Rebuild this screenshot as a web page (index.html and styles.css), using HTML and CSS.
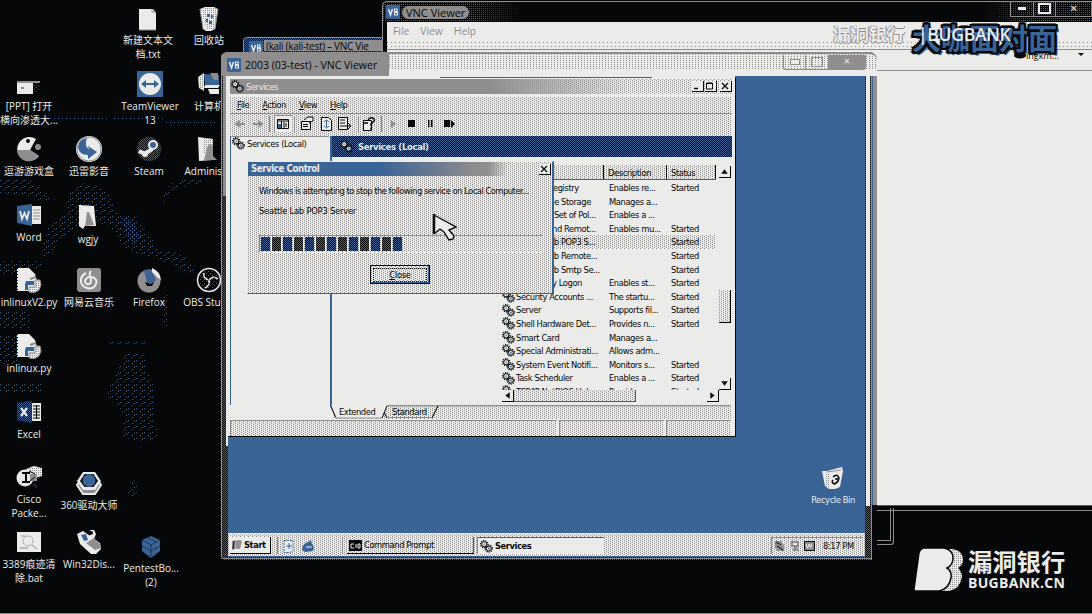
FILE: index.html
```html
<!DOCTYPE html>
<html lang="zh">
<head>
<meta charset="utf-8">
<title>Desktop</title>
<link rel="stylesheet" href="styles.css">
</head>
<body>
<svg class="defs" width="0" height="0">
  <defs>
    <pattern id="chk" width="2" height="2" patternUnits="userSpaceOnUse"><rect width="1" height="1" fill="#060709"/><rect x="1" y="1" width="1" height="1" fill="#060709"/></pattern>
    <pattern id="gdot" width="2" height="2" patternUnits="userSpaceOnUse"><rect width="1" height="1" fill="#908d8e"/></pattern>
    <pattern id="bdot" width="4" height="4" patternUnits="userSpaceOnUse"><rect width="1" height="1" fill="#3a6396"/><rect x="2" y="2" width="1" height="1" fill="#3a6396"/></pattern>
    <pattern id="bthin" width="8" height="6" patternUnits="userSpaceOnUse"><rect width="1" height="1" fill="#3a6396"/><rect x="4" y="3" width="1" height="1" fill="#3a6396"/><rect x="6" y="1" width="1" height="1" fill="#3a6396"/></pattern>
    <symbol id="gears" viewBox="0 0 13 13">
      <circle cx="4.2" cy="4.2" r="2.6" fill="#ebecea" stroke="#060709" stroke-width="1"/>
      <circle cx="4.2" cy="4.2" r="3.6" fill="none" stroke="#060709" stroke-width="1.3" stroke-dasharray="1.1 1.1"/>
      <circle cx="4.2" cy="4.2" r="1" fill="#908d8e"/>
      <circle cx="8.8" cy="8.6" r="2.5" fill="#ebecea" stroke="#060709" stroke-width="1"/>
      <circle cx="8.8" cy="8.6" r="3.5" fill="none" stroke="#060709" stroke-width="1.3" stroke-dasharray="1.1 1.1"/>
      <circle cx="8.8" cy="8.6" r="1" fill="#3a6396"/>
    </symbol>
    <symbol id="vnc" viewBox="0 0 14 14">
      <rect width="14" height="14" rx="1" fill="#3a6396"/>
      <path d="M2.5 4l2 6L6.5 4" fill="none" stroke="#ebecea" stroke-width="1.5"/>
      <path d="M8.5 4h2.6v2.6H8.5zM8.5 7.4h3V10h-3z" fill="none" stroke="#ebecea" stroke-width="1.1"/>
    </symbol>
    <symbol id="py" viewBox="0 0 26 26">
      <path d="M1 1h12l6 6 3 10v7H1z" fill="#ebecea"/><path d="M1.5 1v24" stroke="#060709" stroke-dasharray="1 2"/>
      <path d="M10 14h8v4h-6v5h-3v-6z" fill="#3a6396"/><path d="M19 13h5l1 5-2 5-5 3-5-1v-5h6z" fill="#ebecea" stroke="#908d8e"/><path d="M14 12l6-2" stroke="#908d8e" stroke-width="2"/>
      <path d="M19 13h5l1 5-2 5-5 3-5-1v-5h6z" fill="url(#gdot)"/>
    </symbol>
    <symbol id="bin" viewBox="0 0 20 25">
      <path d="M1 3l5-2h9l4 2-3 20-4 2H7l-3-2z" fill="#ebecea"/><path d="M1 3l3 20M19 3l-3 20" stroke="#908d8e"/>
      <path d="M2 3l5-1h10l2 2-3 18-5 2H8z" fill="url(#gdot)"/>
      <path d="M8 8h3v3H8zM12 9h2v3h-2zM7 13h2v3H7zM10 15h3v3h-3z" fill="#3a6396"/>
    </symbol>
  </defs>
</svg>

<main class="desktop">
  <svg class="wallpaper" width="230" height="614" viewBox="0 0 230 614" fill="url(#bthin)">
    <path d="M48 117h62v2H48zM113 117h50v2h-50zM165 121h50v2h-50z" fill="url(#bdot)"/>
    <path d="M0 180h30l10 8 15 12h-15l-20-5-20-2zM70 190l18-8 20 10 10 22 18 2 12 18 10 14 25 8 15 16-8 2-30-14-34-10-16-24-20-6-14 8-20 18-10 14-6-2 8-30 18-18z"/>
    <path d="M120 216l12 4 10 16-6 8-8-6z" fill="url(#bdot)"/>
    <path d="M0 260h42v10H20l-8 6H0zM0 312h30v16H0zM0 335h18v30H0zM160 200l10-16 20-6 16 2-4 5-20 2-14 8-6 12zM106 340l40 1v4h-38zM126 352l20 3v14l8 18v30l4 18-12 8-24-6 4-24-20-16 6-16zM160 295h8v32h-5zM130 478l8 6-2 12h-8zM0 384h42v8H0z"/>
  </svg>

  <div class="icon i-txt"><svg viewBox="0 0 26 26"><path d="M4 4h14l3 4v17H4z" fill="#ebecea"/><path d="M17 4v3h4M4 25h17" fill="none" stroke="#908d8e"/></svg><span>新建文本文<br>档.txt</span></div>
  <div class="icon i-bin"><svg viewBox="0 0 26 26"><use href="#bin" x="3" y="1" width="20" height="25"/></svg><span>回收站</span></div>
  <div class="icon i-ppt"><svg viewBox="0 0 26 26"><path d="M1 11h16v12H1z" fill="#ebecea"/><path d="M1 10h23v2H1z" fill="#908d8e"/><path d="M18 12h5v9h-5z" fill="url(#bdot)"/><path d="M5 16h3v2H5z" fill="#908d8e"/></svg><span>[PPT] 打开<br>横向渗透大...</span></div>
  <div class="icon i-tv"><svg viewBox="0 0 26 26"><path d="M0 0h26v26H0z" fill="#3a6396"/><circle cx="13" cy="13" r="11" fill="#ebecea"/><path d="M4 13l5-4v3h8V9l5 4-5 4v-3H9v3z" fill="#3a6396"/></svg><span>TeamViewer<br>13</span></div>
  <div class="icon i-pc"><svg viewBox="0 0 26 26"><path d="M2 6l6-4v18l-5-3z" fill="#ebecea"/><path d="M2 6l6-4v18l-5-3z" fill="url(#gdot)"/><path d="M8 3l15 1v11l-14-1z" fill="#3a6396"/><path d="M9 14h15l-2 3H8zM12 18h11v5H14z" fill="#ebecea"/><path d="M14 2h8v7h-4z" fill="#908d8e"/></svg><span>计算机</span></div>

  <div class="icon i-game"><svg viewBox="0 0 26 26"><path d="M13 1a12 12 0 1 0 10 19l-9-6 6-11a12 12 0 0 0-7-2z" fill="#ebecea"/><path d="M1 14h13l9 6A12 12 0 0 1 1 14z" fill="#908d8e"/><circle cx="12" cy="5" r="2" fill="#060709"/><circle cx="22" cy="11" r="3" fill="#908d8e"/></svg><span>逗游游戏盒</span></div>
  <div class="icon i-xl"><svg viewBox="0 0 26 26"><circle cx="13" cy="13" r="13" fill="#ebecea"/><circle cx="13" cy="13" r="12" fill="none" stroke="#908d8e"/><path d="M2 11q1-8 9-9-3 7 2 12l-1-4 9 6-9 7v-4Q3 19 2 11z" fill="#3a6396"/></svg><span>迅雷影音</span></div>
  <div class="icon i-steam"><svg viewBox="0 0 26 26"><circle cx="13" cy="13" r="12" fill="#3a6396"/><circle cx="13" cy="13" r="12" fill="url(#chk)"/><path d="M3 15l6 3 7-5" fill="none" stroke="#ebecea" stroke-width="4"/><circle cx="17" cy="9" r="4" fill="#3a6396" stroke="#ebecea" stroke-width="2"/><circle cx="9" cy="18" r="3" fill="#ebecea"/></svg><span>Steam</span></div>
  <div class="icon i-adm"><svg viewBox="0 0 26 26"><path d="M2 1l15 2v21L3 25z" fill="#ebecea"/><path d="M8 2l9 1v14H8z" fill="url(#gdot)"/><path d="M11 12q4-8 6 0v8l4 4H8z" fill="#908d8e"/></svg><span>Administ...</span></div>

  <div class="icon i-word"><svg viewBox="0 0 26 26"><path d="M15 4h10v18H15z" fill="#ebecea"/><path d="M17 8h7M17 11h7M17 14h7M17 17h7" stroke="#908d8e"/><path d="M1 4l15-2v22L1 21z" fill="#3a6396"/><path d="M4 9l2 8 2.500-6 2.500 6 2-8" fill="none" stroke="#ebecea" stroke-width="1.8"/></svg><span>Word</span></div>
  <div class="icon i-wg"><svg viewBox="0 0 26 26"><path d="M4 1l15 1 2 20-11 0-2 3-4-3z" fill="#ebecea"/><path d="M12 8l2 0 5 13-9 1z" fill="#908d8e"/></svg><span>wgjy</span></div>

  <div class="icon i-py2"><svg viewBox="0 0 26 26"><use href="#py" width="26" height="26"/></svg><span>inlinuxV2.py</span></div>
  <div class="icon i-net"><svg viewBox="0 0 26 26"><rect x="1" y="1" width="24" height="24" rx="3" fill="#908d8e"/><path d="M15 4q-2 2-1 5t1 5a3 3 0 1 1-5-2q2-3 6-2 6 2 4 7-3 6-9 4-7-2-6-9 1-4 5-6" fill="none" stroke="#ebecea" stroke-width="2"/></svg><span>网易云音乐</span></div>
  <div class="icon i-ff"><svg viewBox="0 0 26 26"><circle cx="13" cy="14" r="11.500" fill="#908d8e"/><path d="M8 4l6-2 4 6 2 5-4 4-5-1-1-5z" fill="#3a6396"/><path d="M16 1q8 3 9 12l-4-3-5-5z" fill="#ebecea"/><path d="M9 15l6 2 3-2-2 4h-5z" fill="#060709"/></svg><span>Firefox</span></div>
  <div class="icon i-obs"><svg viewBox="0 0 26 26"><circle cx="13" cy="13" r="11.500" fill="#060709" stroke="#ebecea" stroke-width="1.5"/><path d="M13 13q-6-1-5-7M13 13q4-5 9-1M13 13q1 6-4 8" fill="none" stroke="#ebecea" stroke-width="1.6"/><circle cx="13" cy="13" r="10" fill="url(#bdot)"/></svg><span>OBS Stud...</span></div>

  <div class="icon i-py"><svg viewBox="0 0 26 26"><use href="#py" width="26" height="26"/></svg><span>inlinux.py</span></div>
  <div class="icon i-xls"><svg viewBox="0 0 26 26"><path d="M15 4h10v18H15z" fill="#ebecea"/><path d="M17 7h7M17 10h7M17 13h7M17 16h7M17 19h7M20.500 6v14" stroke="#060709"/><path d="M1 4l15-2v22L1 21z" fill="#3a6396"/><path d="M1 4l15-2v22L1 21z" fill="url(#chk)"/><path d="M5 9l6 8M11 9l-6 8" stroke="#ebecea" stroke-width="2.200"/></svg><span>Excel</span></div>
  <div class="icon i-cisco"><svg viewBox="0 0 26 26"><circle cx="9" cy="14" r="8.500" fill="#ebecea"/><path d="M10 5l8-3 8 2v8l-7 2z" fill="#ebecea"/><path d="M12 4h13v7l-10 3z" fill="url(#gdot)"/><path d="M6 9h8M10 9v9M6 18h8" stroke="#060709" stroke-width="2"/><path d="M14 10h7v7h-7z" fill="#908d8e"/><path d="M13 7l6 3M14 17l5-4" stroke="#060709"/><path d="M17 20l4 3" stroke="#3a6396"/></svg><span>Cisco<br>Packe...</span></div>
  <div class="icon i-360"><svg viewBox="0 0 26 26"><path d="M7 6h12l6 9-6 9H7l-6-9z" fill="#908d8e" stroke="#ebecea" stroke-width="2"/><path d="M7 2h12l6 9-6 9H7L1 11z" fill="#ebecea"/><path d="M8.500 4h9l4.500 7-4.500 6h-9L4 11z" fill="#060709"/><circle cx="13" cy="10.500" r="6.500" fill="#3a6396"/><circle cx="13" cy="10.500" r="4" fill="url(#bdot)"/></svg><span>360驱动大师</span></div>
  <div class="icon i-bat"><svg viewBox="0 0 26 26"><path d="M1 3h24v20H1z" fill="#ebecea"/><circle cx="12" cy="12" r="5" fill="none" stroke="#908d8e" stroke-dasharray="2 1"/><path d="M16 16l5 4M4 19h8M5 7h4" stroke="#908d8e"/></svg><span>3389痕迹清<br>除.bat</span></div>
  <div class="icon i-w32"><svg viewBox="0 0 26 26"><path d="M1 5l6-3 17 12 1 6-5 5h-5L4 15z" fill="#ebecea"/><path d="M12 7l5-2V3l-4-2h5l2 4-2 5z" fill="#ebecea"/><path d="M5 6l5-1 2 6-4 1z" fill="#3a6396"/><path d="M10 14l8-5 6 6 1 4-6 2z" fill="#908d8e"/></svg><span>Win32Dis...</span></div>
  <div class="icon i-pen"><svg viewBox="0 0 26 26"><path d="M13 3l9 4v11l-9 7-9-7V7z" fill="#3a6396"/><path d="M4 7l9 5 9-5M13 12v13M8 4l10 5M4 13l9 5 9-5" fill="none" stroke="#060709" stroke-width=".7" stroke-dasharray="2 1"/></svg><span>PentestBo...<br>(2)</span></div>

  <section class="win-back">
    <header class="back-title"><svg width="14" height="14"><use href="#vnc"/></svg><span class="glow">VNC Viewer</span>
      <div class="back-ctl"><i class="min"></i><i class="max"></i><i class="x">✕</i></div>
    </header>
    <nav class="back-menu"><span>File</span><span>View</span><span>Help</span></nav>
    <div class="back-line"></div>
  </section>

  <div class="kali-edge"></div>
  <section class="win-kali"><svg width="14" height="14"><use href="#vnc"/></svg><span>(kali (kali-test) – VNC Vie</span></section>

  <section class="win-vnc">
    <header class="vnc-title"><svg width="14" height="14"><use href="#vnc"/></svg><span>2003 (03-test) - VNC Viewer</span>
      <div class="vnc-ctl"><i class="min"></i><i class="max"></i><i class="x">✕</i></div>
    </header>
    <div class="guest">
      <div class="strip"></div>
      <section class="services">
        <header class="sv-title"><svg width="13" height="13"><use href="#gears"/></svg><span>Services</span>
          <b class="wb"><svg viewBox="0 0 10 10"><path d="M2 7.500h4" stroke="#060709" stroke-width="1.500"/></svg></b><b class="wb"><svg viewBox="0 0 10 10"><path d="M1.500 2h6v6h-6zM1.500 2.500h6" fill="none" stroke="#060709"/></svg></b><b class="wb gap"><svg viewBox="0 0 10 10"><path d="M2 2l6 6M8 2L2 8" stroke="#060709" stroke-width="1.300"/></svg></b>
        </header>
        <nav class="sv-menu"><span><u>F</u>ile</span><span><u>A</u>ction</span><span><u>V</u>iew</span><span><u>H</u>elp</span></nav>
        <svg class="sv-tools" width="501" height="22" viewBox="231 114 501 22" fill="none" stroke="#060709">
          <path d="M246 124h-8m3-3l-4 3 4 3M254 124h8m-3-3l4 3-4 3" stroke="#908d8e" stroke-width="2"/>
          <path d="M270.500 116v16M295.500 116v16M359.500 116v16M382.500 116v16" stroke="#908d8e"/>
          <path d="M275.500 132.500v-17h18" stroke="#908d8e"/><path d="M276 116h17v16h-17z" fill="#ebecea" stroke="none"/>
          <path d="M278.500 119.500h11v9h-11zM278 121h11M282.500 121v8" /><path d="M279 124h3v4h-3z" fill="#3a6396" stroke="none"/><path d="M285 122v6M287 123v4" />
          <path d="M302.500 121.500h9v8h-9zM305 120l4-3h5v4l-4 2M304 124.500h5M304 126.500h5" fill="#ebecea"/>
          <path d="M322.500 117.500h7l3 3v10h-10z" fill="#ebecea"/><path d="M327.500 120v7M325 122l2.500-2 2.500 2M325 126l2.500 2 2.500-2" stroke="#3a6396"/>
          <path d="M339.500 117.500h9v12h-9zM341 120h5M341 123h5M341 126h4M345 126h6m-2-3l3 3-3 3" fill="#ebecea"/>
          <path d="M364.500 120.500h8v10h-8z" fill="#ebecea"/><path d="M369 120q2-3 5-2 3 2 0 4l-2 2v2M372 127.500v2M365 123h4" stroke-width="1.500"/>
          <path d="M392 120l5 4-5 4z" fill="#908d8e" stroke="none"/><path d="M409 120h7v7h-7zM429 120h1.500v7H429zM432 120h1.500v7H432zM445 120h6v7h-6zM452 120l4 4-4 4z" fill="#060709" stroke="none"/>
        </svg>
        <div class="sv-body">
          <aside class="tree"><svg width="13" height="13"><use href="#gears"/></svg><span>Services (Local)</span></aside>
          <div class="pane">
            <div class="banner"><svg width="13" height="13"><use href="#gears"/></svg><span>Services (Local)</span></div>
            <div class="list">
              <div class="cols"><span class="c1"></span><span class="c2">Description</span><span class="c3">Status</span></div>
              <div class="rows">
                <div class="row"><svg><use href="#gears"/></svg><span class="n">Remote Registry</span><span class="d">Enables re...</span><span>Started</span></div>
                <div class="row"><svg><use href="#gears"/></svg><span class="n">Removable Storage</span><span class="d">Manages a...</span><span></span></div>
                <div class="row"><svg><use href="#gears"/></svg><span class="n">Resultant Set of Pol...</span><span class="d">Enables a ...</span><span></span></div>
                <div class="row"><svg><use href="#gears"/></svg><span class="n">Routing and Remot...</span><span class="d">Enables mu...</span><span>Started</span></div>
                <div class="row sel"><svg><use href="#gears"/></svg><span class="n">Seattle Lab POP3 S...</span><span class="d"></span><span>Started</span></div>
                <div class="row"><svg><use href="#gears"/></svg><span class="n">Seattle Lab Remote...</span><span class="d"></span><span>Started</span></div>
                <div class="row"><svg><use href="#gears"/></svg><span class="n">Seattle Lab Smtp Se...</span><span class="d"></span><span>Started</span></div>
                <div class="row"><svg><use href="#gears"/></svg><span class="n">Secondary Logon</span><span class="d">Enables st...</span><span>Started</span></div>
                <div class="row"><svg><use href="#gears"/></svg><span class="n">Security Accounts ...</span><span class="d">The startu...</span><span>Started</span></div>
                <div class="row"><svg><use href="#gears"/></svg><span class="n">Server</span><span class="d">Supports fil...</span><span>Started</span></div>
                <div class="row"><svg><use href="#gears"/></svg><span class="n">Shell Hardware Det...</span><span class="d">Provides n...</span><span>Started</span></div>
                <div class="row"><svg><use href="#gears"/></svg><span class="n">Smart Card</span><span class="d">Manages a...</span><span></span></div>
                <div class="row"><svg><use href="#gears"/></svg><span class="n">Special Administrati...</span><span class="d">Allows adm...</span><span></span></div>
                <div class="row"><svg><use href="#gears"/></svg><span class="n">System Event Notifi...</span><span class="d">Monitors s...</span><span>Started</span></div>
                <div class="row"><svg><use href="#gears"/></svg><span class="n">Task Scheduler</span><span class="d">Enables a ...</span><span>Started</span></div>
                <div class="row"><svg><use href="#gears"/></svg><span class="n">TCP/IP NetBIOS Hel...</span><span class="d">Provides s...</span><span>Started</span></div>
              </div>
              <div class="vbar"><b class="sb"><svg viewBox="0 0 10 10"><path d="M2 7l3-4 3 4z"/></svg></b><b class="thumb"></b><b class="sb"><svg viewBox="0 0 10 10"><path d="M2 3l3 4 3-4z"/></svg></b></div>
              <div class="hbar"><b class="sb"><svg viewBox="0 0 10 10"><path d="M7 2L3 5l4 3z"/></svg></b><b class="hthumb"></b><b class="sb"><svg viewBox="0 0 10 10"><path d="M3 2l4 3-4 3z"/></svg></b></div>
            </div>
          </div>
        </div>
        <div class="tabs">
          <svg width="400" height="15" viewBox="330 404 400 15"><path d="M386 404.500h346" stroke="#908d8e" stroke-width="1.500"/><path d="M330 404l6 13h46l5-13z" fill="#ebecea"/><path d="M330 404l6 13h46M388 416.500h44l6-12" fill="none" stroke="#908d8e"/><path d="M330.500 404l5 12M382 417l5-12M384 411l3 6M432 417l6-12" fill="none" stroke="#060709"/></svg>
          <span class="t1">Extended</span><span class="t2">Standard</span>
        </div>
        <div class="status"><i></i><i></i><i></i></div>
      </section>

      <section class="dialog">
        <header><span>Service Control</span><b class="wb"><svg viewBox="0 0 10 10"><path d="M2 2l6 6M8 2L2 8" stroke="#060709" stroke-width="1.300"/></svg></b></header>
        <p class="msg">Windows is attempting to stop the following service on Local Computer...</p>
        <p class="svc">Seattle Lab POP3 Server</p>
        <div class="progress"><i></i><i></i><i></i><i></i><i></i><i></i><i></i><i></i><i></i><i></i><i></i><i></i><i></i></div>
        <button class="close"><span><u>C</u>lose</span></button>
      </section>

      <svg class="cursor" width="26" height="28" viewBox="0 0 26 28"><path d="M2 1l22 12-7 3 5 6-1 3-4 1-5-8-4-2-6 4z" fill="#ebecea"/><path d="M2 1l22 12-7 3 5 6-1 3-4 1-5-8" fill="none" stroke="#060709" stroke-width="1.400"/><path d="M2 0v20" stroke="#060709" stroke-width="2.500"/><path d="M2 20l6-5 4 3" fill="none" stroke="#060709" stroke-width="1.200"/></svg>

      <div class="recycle"><svg width="22" height="25" viewBox="0 0 22 25"><path d="M0 5h5l15-4 1 4-3 16-5 2H7l-4-3z" fill="#ebecea"/><path d="M3 8l4 0 0 14-3-2z" fill="url(#gdot)"/><path d="M11 11q4-4 6 1-1 5-5 6-3-2-1-4M13 13h3" fill="none" stroke="#060709" stroke-width="1.500"/><path d="M5 6l14-2" stroke="#908d8e"/></svg><span>Recycle Bin</span></div>

      <footer class="taskbar">
        <div class="start"><svg width="12" height="12" viewBox="0 0 12 12"><path d="M1 2l4-1-1 9-3 1z" fill="#908d8e"/><path d="M3 2L2 10" stroke="#060709"/><path d="M5 2q3-2 6 0l-2 8q-3-1-5 0z" fill="#908d8e"/></svg><span>Start</span></div>
        <div class="ql"><svg width="34" height="14" viewBox="0 0 34 14"><path d="M2 1.500h9v10l-3 2H2z" fill="#ebecea" stroke="#3a6396" stroke-dasharray="2 1"/><path d="M7 4v6M4 7h6" stroke="#3a6396"/><path d="M20 11q0-6 6-8l3-2 1 4q3 3 1 7l-8 1z" fill="#3a6396"/><path d="M24 8h6" stroke="#ebecea"/></svg></div>
        <div class="task"><svg width="13" height="11" viewBox="0 0 13 11"><path d="M0 0h13v11H0z" fill="#060709"/><path d="M2 4h3M2 4v4h3M7 4v4M9 4v4h2V4z" stroke="#ebecea" fill="none"/></svg><span>Command Prompt</span></div>
        <div class="task active"><svg width="13" height="13"><use href="#gears"/></svg><span>Services</span></div>
        <div class="tray"><svg width="42" height="14" viewBox="0 0 42 14"><path d="M2 2h6l3 4v6H5L2 9z" fill="#908d8e"/><path d="M3 3l5 3M4 7l6 4" stroke="#060709"/><path d="M18 2h8v6h-2l2 4h-7l2-4h-3z" fill="#908d8e"/><path d="M20 4h4v2h-4z" fill="#ebecea"/><path d="M31.500 2.500h10v9h-10z" fill="#908d8e" stroke="#060709"/><path d="M33 5l1.500 4L36 5l1.500 4 1-4" stroke="#ebecea" fill="none"/></svg><span>8:17 PM</span></div>
      </footer>
    </div>
  </section>

  <div class="mark">
    <span class="mark-a">漏洞银行</span>
    <span class="mark-b">大咖面对面</span>
    <span class="mark-d">|BUGBANK</span>
    <span class="mark-e"><svg width="12" height="7"><ellipse cx="6" cy="3.500" rx="6" ry="3" fill="#060709"/></svg>ingkm...</span>
    <svg class="mark-v" width="6" height="4"><path d="M0 0h6L3 3z" fill="#060709"/></svg>
  </div>

  <div class="brand">
    <svg width="50" height="44" viewBox="0 0 50 44"><path d="M30 1h8q10 1 11 10 0 6-5 9 4 4 4 9-2 12-13 14h-8z" fill="#ebecea"/><path d="M30 1h8q10 1 11 10 0 6-5 9 4 4 4 9-2 12-13 14h-8z" fill="url(#gdot)"/><path d="M10 0h20q9 2 9 10 0 7-6 10 5 3 4 10-2 11-12 13H1q-1 0-1-2L5 5q1-4 5-5z" fill="#ebecea" stroke="#060709" stroke-width="1.500"/></svg>
    <div><strong>漏洞银行</strong><em>BUGBANK.CN</em></div>
  </div>
</main>
</body>
</html>
```

FILE: styles.css
```css
:root {
  --k: #060709;
  --w: #ebecea;
  --g: #908d8e;
  --b: #3a6396;
  --face:
    conic-gradient(at 1px 1px, transparent 75%, var(--g) 0) 0 0 / 4px 2px,
    conic-gradient(at 1px 1px, transparent 75%, var(--g) 0) 2px 1px / 4px 2px;
  --navy: repeating-conic-gradient(var(--k) 0 25%, transparent 0 50%) 0 0 / 2px 2px;
  --sparse: conic-gradient(at 1px 1px, transparent 75%, var(--g) 0) 0 0 / 4px 4px;
}
* { box-sizing: border-box; }
body { margin: 0; background: var(--k); }
.defs { position: absolute; }
p { margin: 0; }
i, em { font-style: normal; }
.desktop {
  position: relative; width: 1092px; height: 614px; overflow: hidden;
  background: var(--k); border-bottom: 1px solid var(--g);
  font-family: "Open Sans", "Noto Sans CJK SC", sans-serif; font-size: 11px; color: var(--w);
}
.wallpaper { position: absolute; left: 0; top: 0; }

/* desktop shortcuts */
.icon {
  position: absolute; width: 80px; display: flex; flex-direction: column; align-items: center; gap: 3px;
  text-align: center; line-height: 13.5px; font-size: 10px; white-space: nowrap;
}
.icon svg { width: 26px; height: 26px; }
.i-txt { left: 108px; top: 5px; }
.i-bin { left: 169px; top: 5px; }
.i-ppt { left: -11px; top: 71px; }
.i-tv { left: 110px; top: 71px; }
.i-pc { left: 169px; top: 71px; }
.i-game { left: -11px; top: 136px; }
.i-xl { left: 49px; top: 136px; }
.i-steam { left: 109px; top: 136px; }
.i-adm { left: 169px; top: 136px; }
.i-word { left: -11px; top: 202px; }
.i-wg { left: 48px; top: 204px; }
.i-py2 { left: -11px; top: 267px; }
.i-net { left: 49px; top: 267px; }
.i-ff { left: 109px; top: 267px; }
.i-obs { left: 169px; top: 267px; }
.i-py { left: -11px; top: 333px; }
.i-xls { left: -11px; top: 399px; }
.i-cisco { left: -11px; top: 464px; }
.i-360 { left: 49px; top: 470px; }
.i-bat { left: -11px; top: 529px; }
.i-w32 { left: 49px; top: 529px; }
.i-pen { left: 111px; top: 533px; }

/* window at the back, right */
.win-back {
  position: absolute; left: 382px; top: 1px; width: 720px; height: 510px;
  background: var(--k); border: 1px solid var(--g); border-radius: 5px 0 0 0; padding-left: 4px;
}
.back-title {
  display: flex; align-items: center; gap: 4px; height: 20px; margin-left: -4px; padding-left: 3px;
  background: linear-gradient(90deg, transparent 90px, var(--k) 140px, var(--k) 600px, transparent 650px), conic-gradient(at 1px 1px, transparent 75%, var(--b) 0) 0 0 / 2px 2px;
}
.glow { color: var(--k); font-size: 11px; line-height: 13px; padding: 0 4px; margin-left: -2px; background: var(--g); border-radius: 7px; }
.back-ctl { display: flex; height: 15px; margin: -6px 9px 0 auto; border: 1px solid var(--g); border-top: 0; align-items: center; width: 82px; }
.back-ctl i, .vnc-ctl i { display: flex; flex: 1; align-items: center; justify-content: center; height: 100%; border-right: 1px solid var(--g); font: bold 10px "DejaVu Sans", sans-serif; }
.back-ctl .x { flex: 1.6; border: 0; }
.min::before { content: ""; width: 8px; height: 3px; background: var(--w); }
.max::before { content: ""; width: 9px; height: 7px; border: 2px solid var(--w); }
.back-menu {
  display: flex; gap: 11px; height: 28px; padding: 2px 0 0 6px;
  color: var(--g); font-size: 10.3px; line-height: 14px; border-bottom: 1px solid var(--g);
  background: linear-gradient(var(--w), var(--w)) 0 0 / 100% 20px no-repeat, var(--sparse), var(--w);
}
.back-line { height: 456px; background: linear-gradient(var(--g), var(--g)) 0 20px / 100% 1px no-repeat, var(--w); border-bottom: 1px solid var(--b); }

.kali-edge { position: absolute; left: 850px; top: 508px; width: 44px; height: 37px; border: 1px solid var(--g); border-top: 0; border-radius: 0 0 3px 0; }
.kali-edge::after { content: ""; display: block; width: 39px; height: 32px; border: 1px solid var(--g); border-width: 0 1px 1px 0; }
.win-kali {
  position: absolute; left: 243px; top: 37px; width: 140px; height: 18px; display: flex; gap: 3px; padding: 3px 0 0 5px;
  border: 1px solid var(--g); border-radius: 4px 0 0 0; color: var(--k); font-size: 10px; line-height: 10px; letter-spacing: -.3px; white-space: nowrap; overflow: hidden;
  background: linear-gradient(var(--g), var(--g)) 20px 2px / 118px 11px no-repeat, var(--navy), var(--b);
}
.win-kali svg, .vnc-title svg, .back-title svg { flex: none; }

/* viewer window in front */
.win-vnc {
  position: absolute; left: 221px; top: 52px; width: 656px; height: 508px; border-radius: 6px 8px 3px 4px;
  background:
    linear-gradient(var(--k), var(--k)) 651px 453px / 6px 60px no-repeat,
    linear-gradient(var(--g), var(--g)) 650px 0 / 1px 100% no-repeat,
    linear-gradient(var(--g), var(--g)) 652px 0 / 4px 453px no-repeat,
    linear-gradient(var(--b), var(--b)) 651px 0 / 1px 453px no-repeat,
    linear-gradient(var(--g), var(--g)) 0 506px / 651px 1px no-repeat,
    linear-gradient(var(--g), var(--g)) 0 0 / 1px 100% no-repeat,
    linear-gradient(var(--w), var(--w)) 645px 24px / 4px 430px no-repeat,
    linear-gradient(var(--w), var(--w)) 5px 24px / 2px 370px no-repeat,
    linear-gradient(var(--g), var(--g)) 2px 24px / 3px 120px no-repeat,
    var(--navy), var(--b);
}
.vnc-title {
  display: flex; align-items: center; gap: 4px; height: 24px; padding: 0 0 0 6px; border-top: 2px solid var(--g); border-radius: 6px 8px 0 0;
  color: var(--k); font-size: 10.5px; white-space: nowrap;
  background: linear-gradient(90deg, var(--g) 168px, transparent 168px), linear-gradient(transparent 15px, var(--w) 15px), conic-gradient(at 1px 1px, transparent 75%, var(--g) 0) 0 0 / 3px 2px, var(--w);
}
.vnc-ctl { display: flex; width: 83px; height: 15px; margin: -6px 11px 0 auto; border: 1px solid var(--g); border-top: 0; border-radius: 0 0 3px 3px; }
.vnc-ctl .min::before { height: 4px; border: 1px solid var(--g); }
.vnc-ctl .max::before { border: 1px solid var(--g); width: 10px; height: 8px; }
.vnc-ctl .x { flex: 1.7; background: var(--g); border: 0; font-size: 8px; color: var(--w); }
.guest {
  position: relative; margin-left: 7px; width: 637px; height: 481px; background: var(--b); overflow: hidden;
  font: 9.3px/12px "DejaVu Sans Condensed", "DejaVu Sans", sans-serif; letter-spacing: -.42px; color: var(--k);
}
.strip { height: 2px; width: 507px; background: linear-gradient(var(--b), var(--b)) 212px 1px / 212px 1px no-repeat, var(--w); }

/* services console */
.services { width: 508px; height: 359px; padding: 1px 3px 0 2px; display: flex; flex-direction: column; background: var(--w); border-right: 1px solid var(--k); border-bottom: 1px solid var(--k); }
.sv-title { display: flex; align-items: center; height: 15px; padding-left: 1px; margin-bottom: 3px; flex: none; color: var(--w); background: linear-gradient(90deg, var(--g) 260px, transparent 400px), var(--face), var(--w); }
.sv-title span { margin: 0 auto 0 2px; }
.wb { display: block; width: 12px; height: 11px; margin-left: 1px; background: var(--w); border-right: 1px solid var(--k); border-bottom: 1px solid var(--k); }
.wb svg { display: block; width: 10px; height: 10px; }
.wb.gap { margin-left: 3px; margin-right: 0; }
.sv-menu { display: flex; gap: 13px; height: 17px; padding: 2px 0 0 7px; flex: none; background: var(--face), var(--w); border-bottom: 1px solid var(--g); }
u { text-underline-offset: 1px; }
.sv-tools { display: block; flex: none; background: var(--face), var(--w); width: 501px; }
.sv-body { display: flex; height: 269px; flex: none; }
.tree { width: 99px; height: 269px; display: flex; gap: 2px; padding: 0 0 0 1px; border-top: 1px solid var(--g); border-left: 1px solid var(--b); line-height: 13px; white-space: nowrap; }
.pane { flex: 1; border-left: 2px solid var(--b); margin-left: 1px; }
.banner { display: flex; align-items: center; gap: 5px; height: 21px; padding-left: 8px; color: var(--w); font-weight: bold; background: var(--navy), var(--b); font-size: 9.4px; letter-spacing: -.3px; }
.list { display: grid; grid-template: 15px 210px 12px / 214px 15px; width: 230px; margin: 8px 0 0 170px; }
.cols { display: flex; background: var(--face), var(--w); border-bottom: 1px solid var(--b); line-height: 15px; }
.cols span { border-right: 1px solid var(--k); padding-left: 4px; }
.c1 { width: 102px; } .c2 { width: 63px; } .c3 { width: 49px; }
.rows { overflow: hidden; padding-top: 1px; grid-row: 2; grid-column: 1; }
.row { display: flex; height: 13.6px; line-height: 13.6px; align-items: center; white-space: nowrap; }
.row svg { width: 13px; height: 13px; margin-right: 1px; flex: none; }
.row .n { width: 93px; } .row .d { width: 62px; }
.row.sel { background: var(--face); }
.vbar { grid-column: 2; grid-row: 1 / 3; display: flex; flex-direction: column; padding: 1px 0 0; margin-left: 3px; width: 12px; }
.sb { display: block; flex: none; width: 12px; height: 12px; border-right: 1px solid var(--k); border-bottom: 1px solid var(--k); background: var(--w); }
.sb svg { display: block; width: 11px; height: 11px; fill: var(--k); }
.vbar .sb:last-child { margin-top: auto; }
.thumb { width: 12px; height: 33px; margin-top: 112px; background: var(--face), var(--w); border-right: 1px solid var(--k); border-bottom: 1px solid var(--k); }
.hbar { grid-row: 3; grid-column: 1 / 3; display: flex; padding-right: 12px; }
.hthumb { width: 122px; margin-right: auto; background: var(--face), var(--w); border-right: 1px solid var(--b); border-bottom: 1px solid var(--b); }
.tabs { position: relative; height: 14px; flex: none; padding-left: 100px; display: flex; background: linear-gradient(90deg, var(--w) 104px, transparent 104px), var(--face), var(--w); line-height: 14px; }
.tabs svg { flex: none; margin-right: -400px; }
.tabs span { position: relative; } .tabs .t1 { margin-left: 9px; width: 53px; }
.status { display: flex; height: 16px; gap: 2px; flex: none; margin-top: 1px; }
.status i { border-top: 1px solid var(--g); border-left: 1px solid var(--g); background: var(--face), var(--w); width: 65px; }
.status i:first-child { width: 327px; } .status i:nth-child(2) { width: 105px; }

/* progress dialog */
.dialog { position: absolute; left: 19px; top: 85px; width: 307px; height: 133px; border: 1px solid var(--w); border-right: 2px solid var(--b); border-bottom: 1px solid var(--b); background: var(--face), var(--w); }
.dialog header { display: flex; align-items: center; justify-content: space-between; height: 14px; padding: 0 1px 0 3px; color: var(--w); font-weight: bold; font-size: 9.6px; background: linear-gradient(90deg, var(--b) 130px, transparent 230px), linear-gradient(90deg, var(--g) 240px, transparent 260px), var(--face), var(--w); }
.msg { padding: 8px 0 0 11px; white-space: nowrap; line-height: 14px; letter-spacing: -.5px; }
.svc { padding: 6px 0 0 11px; line-height: 14px; letter-spacing: -.22px; }
.progress { display: flex; gap: 2px; margin: 17px 10px 0 11px; height: 18px; padding: 1px; border-top: 1px solid var(--g); border-left: 1px solid var(--g); border-bottom: 1px solid var(--w); }
.progress i { width: 9px; background: var(--navy), var(--b); }
.close { display: block; margin: 12px 0 0 122px; width: 60px; height: 19px; padding: 1px 2px; border: 1px solid var(--k); box-shadow: inset -1px -1px var(--b); background: var(--face), var(--w); font: inherit; letter-spacing: -.3px; color: var(--k); }
.close span { display: block; border: 1px dotted var(--k); line-height: 12px; }
.cursor { position: absolute; left: 204px; top: 138px; }
.recycle { position: absolute; right: 1px; top: 390px; width: 62px; display: flex; flex-direction: column; align-items: center; gap: 3px; color: var(--w); white-space: nowrap; }

/* guest taskbar */
.taskbar { position: absolute; left: 0; right: 0; bottom: 1px; height: 23px; display: flex; align-items: center; padding: 3px 2px 2px 2px; background: var(--face), var(--w); border-top: 1px solid var(--w); }
.taskbar > div { display: flex; align-items: center; height: 17px; }
.start { width: 41px; gap: 1px; padding-left: 1px; font-weight: bold; background: var(--w); border-right: 1px solid var(--k); border-bottom: 1px solid var(--k); }
.ql { width: 66px; margin-left: 6px; padding-left: 4px; border-left: 1px solid var(--g); border-right: 1px solid var(--g); }
.task { width: 127px; margin-left: 4px; gap: 2px; padding-left: 2px; border-right: 1px solid var(--b); border-bottom: 1px solid var(--k); }
.task.active { font-weight: bold; background: var(--w); border: 0; border-top: 1px solid var(--b); border-left: 1px solid var(--g); margin-left: 3px; }
.tray { margin-left: auto; gap: 8px; width: 92px; padding-left: 1px; border-top: 1px solid var(--g); border-left: 1px solid var(--g); }

/* overlay marks */
.mark { position: absolute; left: 833px; top: 20px; width: 259px; height: 45px; white-space: nowrap; line-height: 24px; }
.mark span { position: absolute; }
.mark-a { left: 0; top: 2px; font-size: 18px; font-weight: bold; color: var(--w); text-shadow: 1px 0 var(--g), -1px 0 var(--g), 0 1px var(--g); }
.mark-b {
  left: 79px; top: 4px; font-size: 29px; line-height: 30px; font-weight: bold; color: var(--b);
  text-shadow: 2px 0 var(--k), -2px 0 var(--k), 0 2px var(--k), 0 -2px var(--k), 2px 2px var(--k), -2px -2px var(--k), 2px -2px var(--k), -2px 2px var(--k), 3px 3px var(--b), -3px 2px var(--b), 0 -3px var(--b);
}
.mark-d { left: 85px; top: 2px; font-size: 17.5px; font-weight: 600; letter-spacing: -.3px; color: var(--w); }
.mark-e { left: 181px; top: 30px; font-size: 9px; line-height: 12px; color: var(--k); }
.mark-v { position: absolute; left: 245px; top: 33px; }
.brand { position: absolute; left: 914px; top: 548px; display: flex; gap: 4px; }
.brand strong { display: block; font: bold 24.3px/24px "Noto Sans CJK SC", sans-serif; margin-top: 1px; }
.brand em { display: block; font: bold 14px/18px "Open Sans", sans-serif; letter-spacing: .3px; margin-top: 1px; }
```
